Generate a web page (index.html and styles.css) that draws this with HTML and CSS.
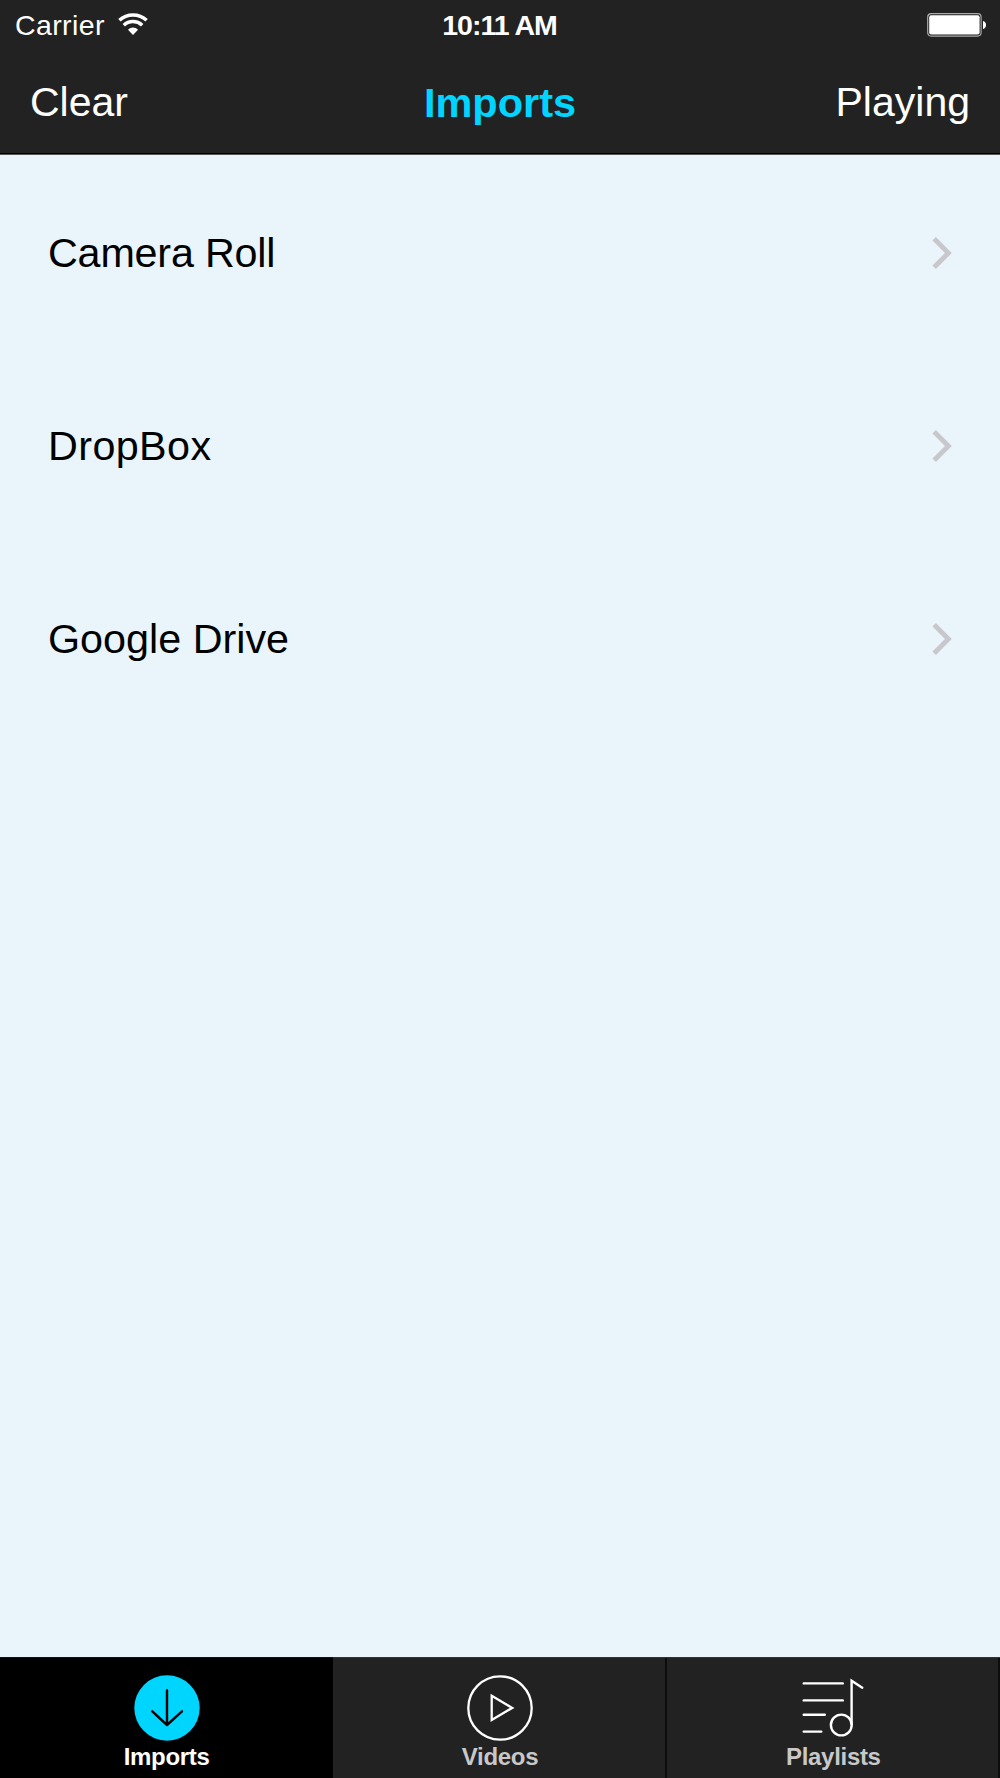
FILE: index.html
```html
<!DOCTYPE html>
<html lang="en">
<head>
    <meta charset="UTF-8">
    <meta name="viewport" content="width=device-width, initial-scale=1.0">
    <title>Imports</title>
    <link rel="stylesheet" href="styles.css">
</head>
<body>
    <div class="app">
        <header class="header">
            <div class="status-bar">
                <div class="carrier">
                    <span>Carrier</span>
                    <svg class="wifi" width="30" height="22" viewBox="0 0 30 22" fill="none" stroke="#fff" stroke-width="3.5">
                        <path d="M1.4 7.2C9 .1 21 .1 28.6 7.2"/>
                        <path d="M5.8 12.2C11 7.4 19 7.4 24.2 12.2"/>
                        <path d="M10 16.8C13 13.6 17 13.6 20 16.8L15 21.9z" fill="#fff" stroke="none"/>
                    </svg>
                </div>
                <span class="time">10:11 AM</span>
                <svg class="battery" width="60" height="24" viewBox="0 0 60 24">
                    <rect x="0.7" y="0.7" width="53.4" height="22.4" rx="3.5" fill="#222" stroke="#aaa" stroke-width="1.2"/>
                    <rect x="2.2" y="2.2" width="50.4" height="19.4" rx="2" fill="#fff"/>
                    <path d="M56 8c4 .5 4 7.5 0 8z" fill="#fff"/>
                </svg>
            </div>
            <nav class="nav-bar">
                <a class="nav-link">Clear</a>
                <h1 class="title">Imports</h1>
                <a class="nav-link nav-right">Playing</a>
            </nav>
        </header>

        <ul class="sources">
            <li class="source">
                <span class="name name-camera">Camera Roll</span>
                <svg class="chevron" width="20" height="32" viewBox="0 0 20 32"><path d="M2.2 1.8 16.4 16 2.2 30.2"/></svg>
            </li>
            <li class="source">
                <span class="name name-dropbox">DropBox</span>
                <svg class="chevron" width="20" height="32" viewBox="0 0 20 32"><path d="M2.2 1.8 16.4 16 2.2 30.2"/></svg>
            </li>
            <li class="source">
                <span class="name">Google Drive</span>
                <svg class="chevron" width="20" height="32" viewBox="0 0 20 32"><path d="M2.2 1.8 16.4 16 2.2 30.2"/></svg>
            </li>
        </ul>

        <footer class="tab-bar">
            <a class="tab active">
                <svg class="icon" width="66" height="66" viewBox="0 0 66 66">
                    <circle cx="33" cy="33" r="32.7" fill="#00d5ff"/>
                    <path d="M33 15.3V50M18.3 36.3 33 50 48 36.3" fill="none" stroke="#000" stroke-width="2.4" stroke-linecap="round" stroke-linejoin="round"/>
                </svg>
                <span>Imports</span>
            </a>
            <a class="tab">
                <svg class="icon" width="66" height="66" viewBox="0 0 66 66" fill="none" stroke="#fff" stroke-width="2.3">
                    <circle cx="33" cy="33" r="31.7"/>
                    <path d="M24.7 20.8V44.9L45.2 32.9z"/>
                </svg>
                <span>Videos</span>
            </a>
            <a class="tab">
                <svg class="icon" width="66" height="66" viewBox="0 0 66 66" fill="none" stroke="#fff" stroke-width="2.4" stroke-linecap="round">
                    <path d="M3.7 8.4H42.8M3.7 25.4H42.8M3.7 39.7H24.8M3.7 56.6H21.3"/>
                    <circle cx="41.3" cy="50" r="10.4"/>
                    <path d="M51.6 49V5.8L62.3 12.7"/>
                </svg>
                <span>Playlists</span>
            </a>
        </footer>
    </div>
</body>
</html>
```
FILE: styles.css
```css
* {
    box-sizing: border-box;
}
body {
    margin: 0;
    font-family: "Liberation Sans", Arial, sans-serif;
    background: #e9f5fb;
}
.app {
    display: flex;
    flex-direction: column;
    width: 1000px;
    height: 1778px;
}
.header {
    height: 155px;
    background: #222;
    color: #fff;
    border-bottom: 1px solid #555;
    box-shadow: inset 0 -1px 0 #000;
}
.status-bar {
    display: grid;
    grid-template-columns: 1fr auto 1fr;
    align-items: center;
    height: 51px;
    padding: 0 13px 0 15px;
    font-size: 28.5px;
}
.carrier {
    display: flex;
    align-items: center;
    gap: 13px;
    letter-spacing: 0.4px;
}
.wifi {
    margin-bottom: 3px;
}
.time {
    margin-right: 3px;
    font-weight: bold;
    letter-spacing: -1px;
}
.battery {
    justify-self: end;
    margin-bottom: 2px;
}
.nav-bar {
    display: grid;
    grid-template-columns: 1fr auto 1fr;
    align-items: center;
    height: 102px;
    padding: 1px 30px 0;
    font-size: 41px;
}
.title {
    margin: 0;
    font-size: 41.5px;
    color: #00d5ff;
}
.nav-right {
    text-align: right;
}
.sources {
    flex: 1;
    margin: 0;
    padding: 0;
    list-style: none;
}
.source {
    display: flex;
    align-items: center;
    justify-content: space-between;
    height: 193.3px;
    padding: 2px 48px 0 48px;
    font-size: 41.3px;
}
.name {
    padding-top: 1px;
}
.name-camera {
    letter-spacing: -0.2px;
}
.name-dropbox {
    letter-spacing: 0.4px;
}
.chevron {
    fill: none;
    stroke: #c7c7cc;
    stroke-width: 4.8;
}
.tab-bar {
    display: flex;
    height: 121px;
    background: #222;
}
.tab {
    flex: 1;
    display: flex;
    flex-direction: column;
    align-items: center;
    padding-top: 17px;
    border-top: 1px solid #333;
    box-shadow: inset -2px 0 0 #0c0c0c;
    color: #c8c8c8;
    font-size: 24px;
    font-weight: bold;
    line-height: 32px;
    letter-spacing: -0.3px;
}
.active {
    background: #000;
    border-top-color: #111;
    box-shadow: none;
    color: #fff;
}
.icon {
    flex: none;
}
```
